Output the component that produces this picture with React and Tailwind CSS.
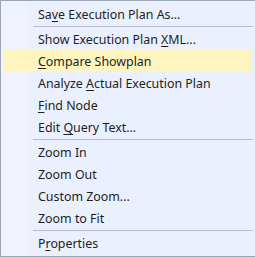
import React from 'react';

const U = ({ children }) => <span className="underline underline-offset-2 decoration-1">{children}</span>;

const groups = [
  [{ label: <>Sa<U>v</U>e Execution Plan As...</> }],
  [
    { label: <>Show Execution Plan <U>X</U>ML...</> },
    { label: <><U>C</U>ompare Showplan</>, active: true },
    { label: <>Analyze <U>A</U>ctual Execution Plan</> },
    { label: <><U>F</U>ind Node</> },
    { label: <>Edit <U>Q</U>uery Text...</> },
  ],
  [
    { label: 'Zoom In' },
    { label: 'Zoom Out' },
    { label: 'Custom Zoom...' },
    { label: 'Zoom to Fit' },
  ],
  [{ label: <>P<U>r</U>operties</> }],
];

const MenuItem = ({ item }) => (
  <div className="relative h-[22px] flex items-center">
    {item.active && <div className="absolute inset-y-0 left-[3px] right-[3px] bg-[#fdf4bf]" />}
    <span className="relative pl-[37px] pt-[2px] text-[12.4px] text-[#1e1e1e] leading-none">{item.label}</span>
  </div>
);

const App = () => {
  return (
    <div className="w-[255px] h-[257px] overflow-hidden bg-white">
      <div
        className="relative w-[256px] h-[257px] border border-[#9ba7b7] bg-[#eaf0fe] py-[2px]"
        style={{ fontFamily: '"Noto Sans", "Open Sans", sans-serif' }}
      >
        <div className="absolute top-0 bottom-0 left-0 w-[27px] bg-[#f0f3fd]" />
        {groups.map((group, gi) => (
          <div key={gi}>
            {gi > 0 && (
              <div className="py-[1px] pl-[32px] pr-[2px]">
                <div className="h-px bg-[#b8bcc8]" />
              </div>
            )}
            {group.map((item, i) => <MenuItem key={i} item={item} />)}
          </div>
        ))}
      </div>
    </div>
  );
};

export default App;
